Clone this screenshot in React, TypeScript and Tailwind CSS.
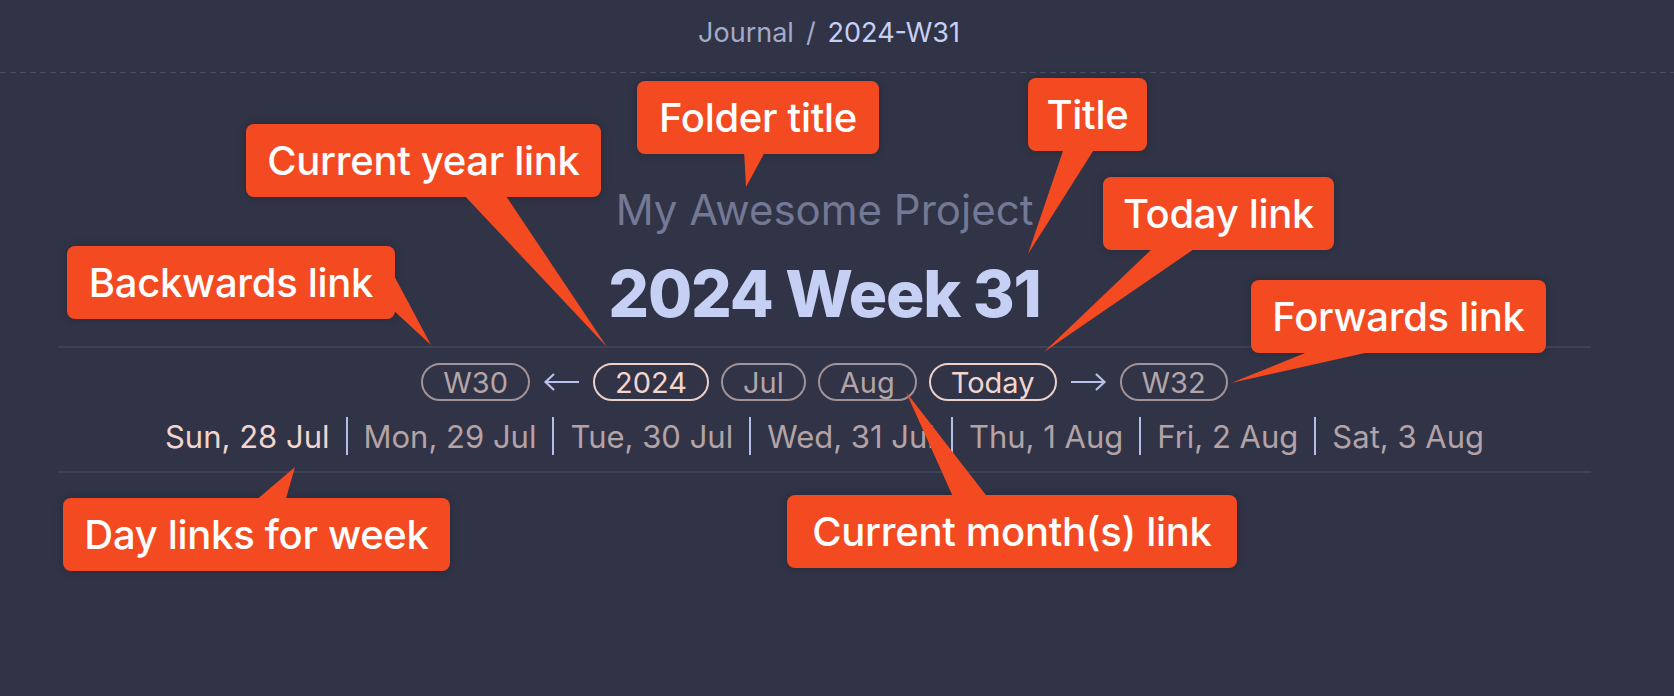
const ORANGE = "#f44a22";

type Callout = {
  label: string;
  box: string;
  tail: string;
};

const callouts: Callout[] = [
  { label: "Folder title", box: "left-[637px] top-[81px] w-[242px]", tail: "744,150 766,150 746,187" },
  { label: "Title", box: "left-[1028px] top-[78px] w-[119px]", tail: "1064,148 1095,148 1028,254" },
  { label: "Current year link", box: "left-[246px] top-[124px] w-[355px]", tail: "462,193 504,193 607,347" },
  { label: "Backwards link", box: "left-[67px] top-[246px] w-[328px]", tail: "391,270 391,308 431,345" },
  { label: "Today link", box: "left-[1103px] top-[177px] w-[231px]", tail: "1154,247 1197,247 1044,352" },
  { label: "Forwards link", box: "left-[1251px] top-[280px] w-[295px]", tail: "1315,349 1383,349 1231,383" },
  { label: "Day links for week", box: "left-[63px] top-[498px] w-[387px]", tail: "254,502 285,502 295,467" },
  { label: "Current month(s) link", box: "left-[787px] top-[495px] w-[450px]", tail: "954,499 989,499 906,392" },
];

const days = [
  { label: "Sun, 28 Jul", active: true },
  { label: "Mon, 29 Jul", active: false },
  { label: "Tue, 30 Jul", active: false },
  { label: "Wed, 31 Jul", active: false },
  { label: "Thu, 1 Aug", active: false },
  { label: "Fri, 2 Aug", active: false },
  { label: "Sat, 3 Aug", active: false },
];

function Pill({ label, active }: { label: string; active?: boolean }) {
  return (
    <span
      className={
        active
          ? "h-[38px] px-[20px] flex items-center rounded-full border-2 border-[#ecd0c9] text-[#f2d5cf] text-[29px] leading-none"
          : "h-[38px] px-[20px] flex items-center rounded-full border-2 border-[#a19397] text-[#b4a5a8] text-[29px] leading-none"
      }
    >
      {label}
    </span>
  );
}

function Arrow({ dir }: { dir: "left" | "right" }) {
  return (
    <svg width="37" height="20" viewBox="0 0 37 20" className="mx-[13px]" fill="none" stroke="#b8c3ec" strokeWidth="2.2">
      {dir === "left" ? (
        <>
          <line x1="2" y1="10" x2="36" y2="10" />
          <polyline points="11,2 2.5,10 11,18" strokeLinejoin="miter" />
        </>
      ) : (
        <>
          <line x1="1" y1="10" x2="35" y2="10" />
          <polyline points="26,2 34.5,10 26,18" strokeLinejoin="miter" />
        </>
      )}
    </svg>
  );
}

export default function App() {
  return (
    <div className="relative w-full h-[696px] overflow-hidden bg-[#313346] font-['Inter',sans-serif]">
      {/* breadcrumb */}
      <div className="h-[72px] pb-[8px] pl-[58px] pr-[74px] flex items-center justify-center gap-[12px] text-[27px] leading-none">
        <span className="text-[#a3abcb]">Journal</span>
        <span className="text-[#a3abcb]">/</span>
        <span className="text-[#c6d0f5]">2024-W31</span>
      </div>
      <div className="h-[1px] w-full bg-[repeating-linear-gradient(to_right,#4b4f66_0_6px,transparent_6px_10px)]" />

      {/* note header */}
      <div className="pl-[58px] pr-[83px] flex flex-col items-center">
        <div className="mt-[113px] h-[48px] flex items-center text-[42px] leading-none text-[#737994]">
          My Awesome Project
        </div>
        <div className="mt-[24px] h-[72px] flex items-center text-[64px] leading-none font-extrabold tracking-[-1.2px] text-[#c6d0f5]">
          2024 Week 31
        </div>
        <div className="mt-[16px] h-[2px] w-full bg-[#3e4257]" />

        <div className="mt-[15px] flex items-center">
          <Pill label="W30" />
          <Arrow dir="left" />
          <div className="flex items-center gap-[12px]">
            <Pill label="2024" active />
            <Pill label="Jul" />
            <Pill label="Aug" />
            <Pill label="Today" active />
          </div>
          <Arrow dir="right" />
          <Pill label="W32" />
        </div>

        <div className="mt-[15px] h-[40px] flex items-center text-[31px] leading-none">
          {days.map((d, i) => (
            <div key={d.label} className="flex items-center">
              {i > 0 && <span className="mx-[16px] w-[2px] h-[38px] bg-[#b3bfe9]" />}
              <span className={d.active ? "text-[#f2d5cf]" : "text-[#b3a3a6]"}>{d.label}</span>
            </div>
          ))}
        </div>
        <div className="mt-[15px] h-[2px] w-full bg-[#3e4257]" />
      </div>

      {/* annotations */}
      {callouts.map((c) => (
        <div
          key={c.label}
          className={`absolute ${c.box} h-[73px] rounded-[8px] bg-[#f44a22] shadow-[0_0_10px_rgba(0,0,0,0.18)] flex items-center justify-center text-white text-[40px] font-medium leading-none tracking-[-0.3px]`}
        >
          {c.label}
        </div>
      ))}
      <svg className="absolute inset-0 pointer-events-none" width="1674" height="696">
        {callouts.map((c) => (
          <polygon key={c.label} points={c.tail} fill={ORANGE} />
        ))}
      </svg>
    </div>
  );
}
